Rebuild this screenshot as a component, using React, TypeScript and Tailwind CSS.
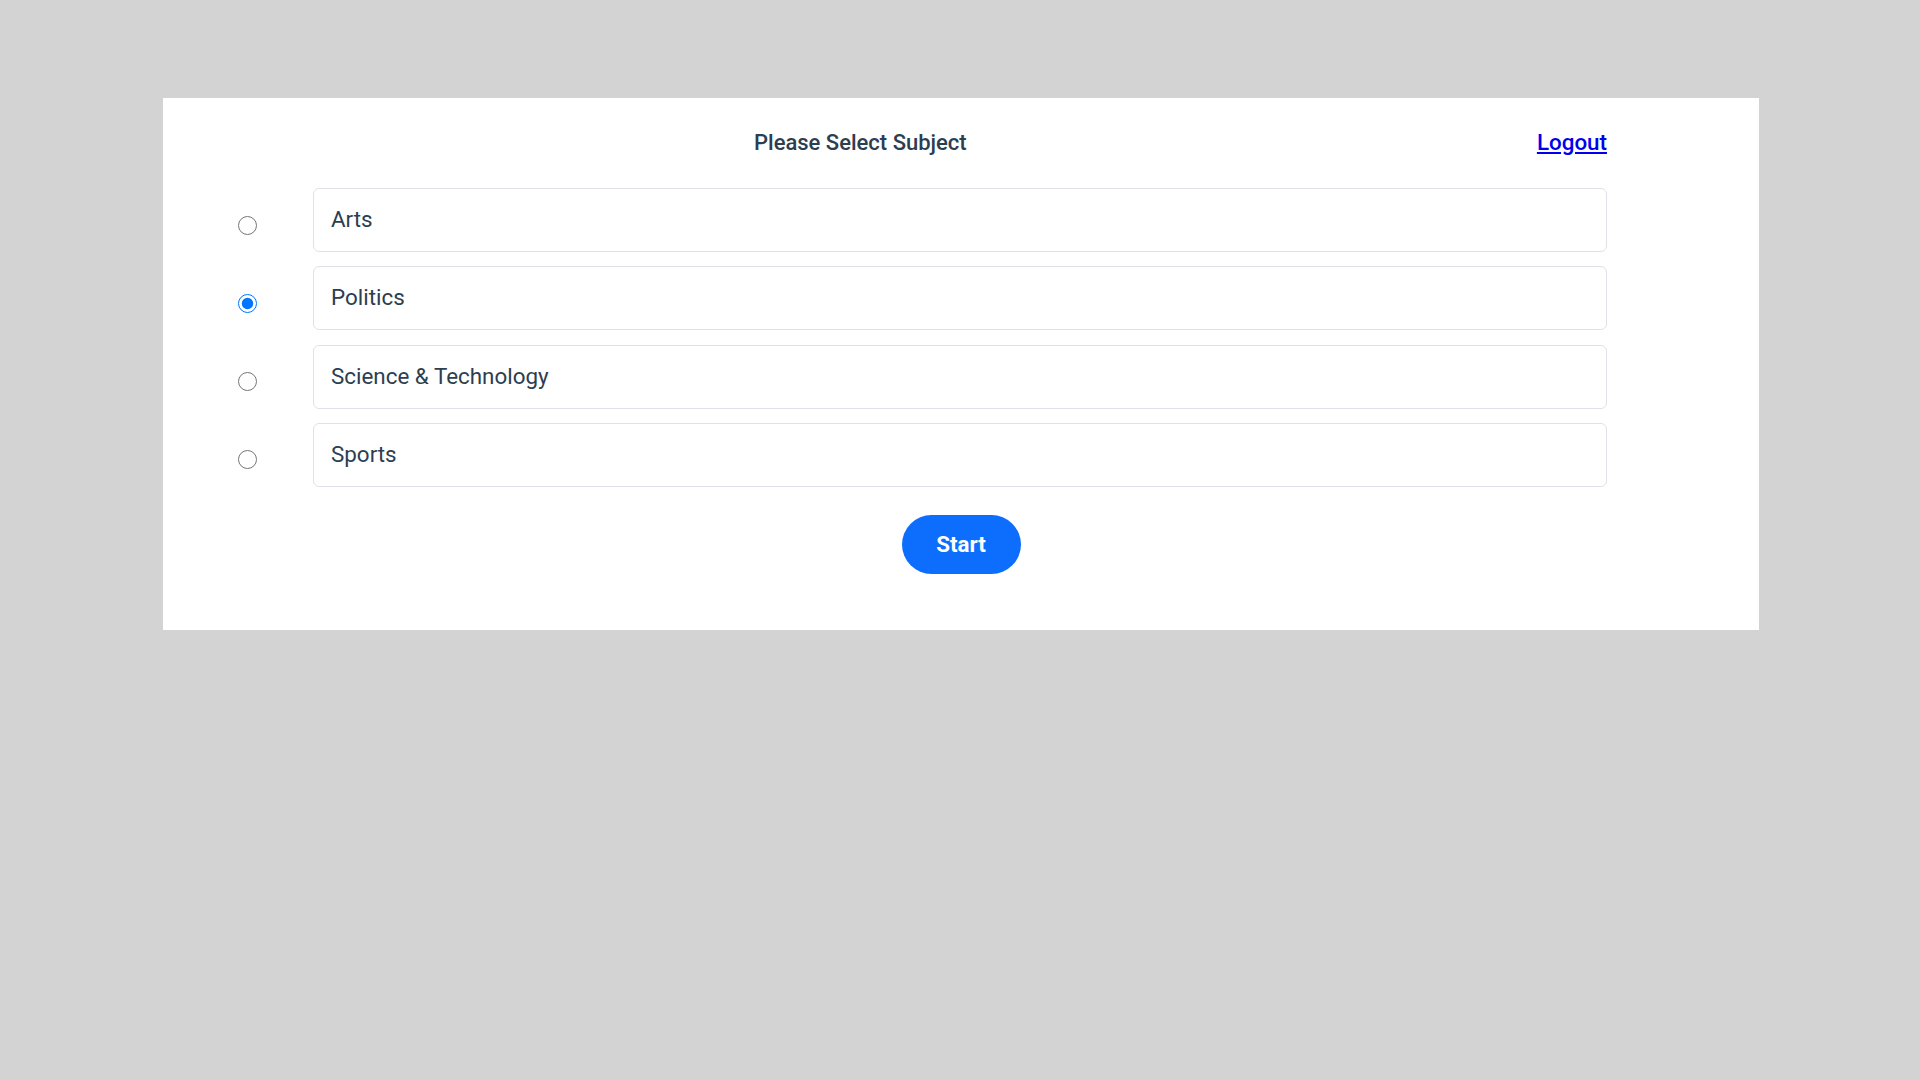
import { useState } from 'react'

const subjects = ['Arts', 'Politics', 'Science & Technology', 'Sports']

export default function App() {
  const [selected, setSelected] = useState('Politics')

  return (
    <div className="min-h-screen w-full bg-[#d3d3d3] pt-[98px] font-['Roboto',sans-serif]">
      <div className="ml-[163px] w-[1596px] bg-white pb-[56px] pt-[28px]">
        {/* Header */}
        <div className="flex items-center justify-between pl-[150px] pr-[152px] leading-[33px]">
          <h1 className="ml-[441px] text-[22px] font-medium text-[#2c3e50]">Please Select Subject</h1>
          <a href="#" className="text-[22.4px] font-medium text-[#0000ee] underline">
            Logout
          </a>
        </div>

        {/* Subject list */}
        <div className="mt-[29px] flex flex-col gap-[14.3px] pr-[152px]">
          {subjects.map((s) => (
            <label key={s} className="flex cursor-pointer items-start">
              <div className="w-[150px] shrink-0 pl-[75px] pt-[27.5px]">
                <input
                  type="radio"
                  name="subject"
                  checked={selected === s}
                  onChange={() => setSelected(s)}
                  className="block h-[19px] w-[19px]"
                />
              </div>
              <div className="flex h-[64px] flex-1 items-center rounded-md border border-[#dee2e6] px-[17px] text-[22.4px] text-[#2c3e50]">
                {s}
              </div>
            </label>
          ))}
        </div>

        {/* Start */}
        <div className="mt-[28px] flex justify-center">
          <button className="flex h-[59px] w-[119px] items-center justify-center rounded-full bg-[#0d6efd] text-[22.4px] font-bold text-white">
            Start
          </button>
        </div>
      </div>
    </div>
  )
}
